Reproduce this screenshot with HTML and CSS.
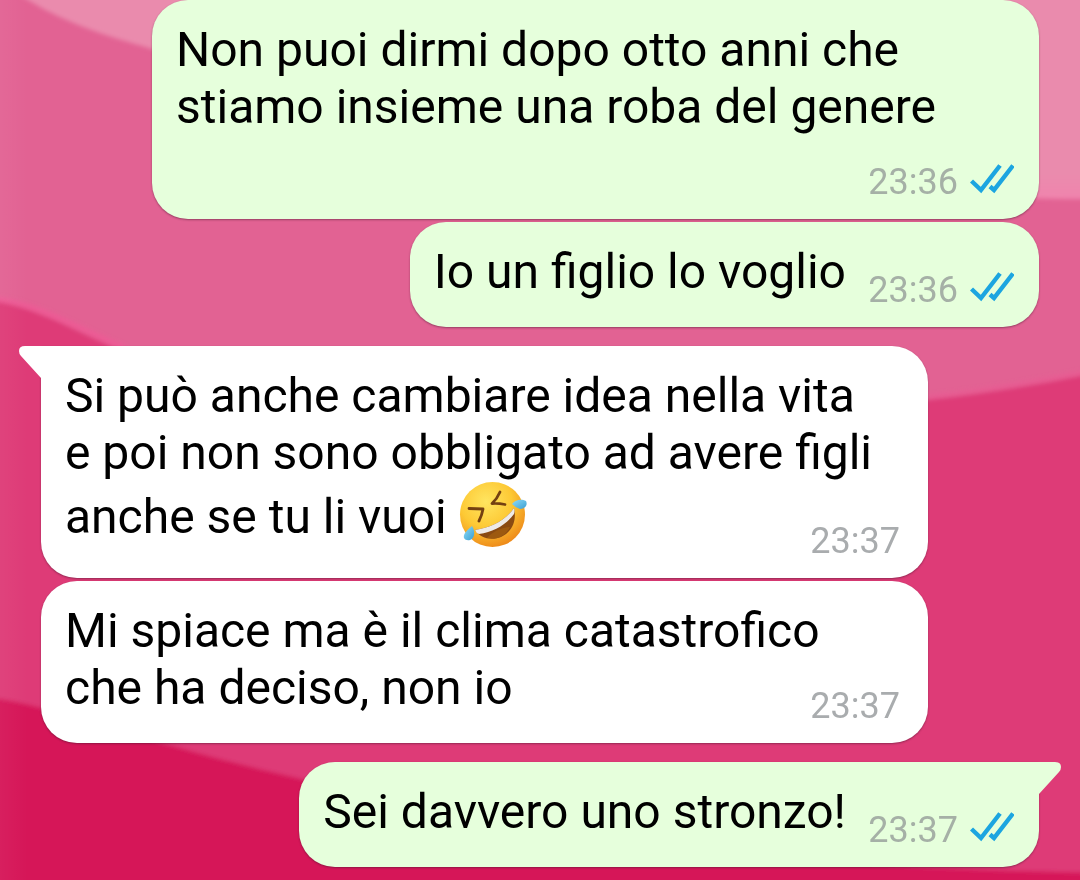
FILE: index.html
```html
<!DOCTYPE html>
<html lang="it">
<head>
    <meta charset="UTF-8">
    <meta name="viewport" content="width=device-width, initial-scale=1.0">
    <title>Chat</title>
    <link rel="stylesheet" href="styles.css">
</head>
<body>
    <svg class="wallpaper" viewBox="0 0 1080 880" preserveAspectRatio="none" aria-hidden="true">
        <defs>
            <linearGradient id="edge" x1="0" x2="1" y1="0" y2="0">
                <stop offset="0" stop-color="#fff" stop-opacity=".04"/>
                <stop offset="1" stop-color="#fff" stop-opacity="0"/>
            </linearGradient>
            <linearGradient id="light" x1="0" x2="0" y1="0" y2="1">
                <stop offset="0" stop-color="#ea8bad"/>
                <stop offset=".88" stop-color="#ea8bad"/>
                <stop offset="1" stop-color="#f084ad"/>
            </linearGradient>
            <filter id="soft"><feGaussianBlur stdDeviation="2"/></filter>
        </defs>
        <rect width="1080" height="880" fill="#e26293"/>
        <g filter="url(#soft)">
            <path d="M12 -10C60 22 100 34 152 49C400 120 700 199 1100 199V-10Z" fill="url(#light)"/>
            <path d="M-10 300C40 308 80 334 125 352C350 430 650 430 928 400Q1010 391 1100 372V900H-10Z" fill="#de3a77"/>
            <path d="M-10 298C40 304 80 330 125 348" fill="none" stroke="#ee5a95" stroke-width="5"/>
            <path d="M928 397Q1010 388 1100 369" fill="none" stroke="#e85c93" stroke-width="4"/>
            <path d="M-10 697C70 710 140 742 301 779C500 830 760 868 1100 873V900H-10Z" fill="#d61459"/>
        </g>
        <rect width="28" height="880" fill="url(#edge)"/>
    </svg>

    <svg class="symbols" aria-hidden="true">
        <symbol id="ticks" viewBox="0 0 44 30">
            <path d="M1.500 17L11 26L30 1.500M20 22.500L24 26L43 1.500" fill="none" stroke="#1ca5e0" stroke-width="4.400"/>
        </symbol>
        <symbol id="tail" viewBox="0 0 22 32">
            <path d="M0 0H16Q22 0 22 5Q22 8 20 10L0 32Z" fill="currentColor"/>
        </symbol>
    </svg>

    <main class="chat">
        <div class="message out">
            <p class="text">Non puoi dirmi dopo otto anni che stiamo insieme una roba del genere<span class="spacer"></span></p>
            <div class="meta"><time>23:36</time><svg class="ticks" role="img" aria-label="Letto"><use href="#ticks"/></svg></div>
        </div>
        <div class="message out">
            <p class="text">Io un figlio lo voglio<span class="spacer"></span></p>
            <div class="meta"><time>23:36</time><svg class="ticks" role="img" aria-label="Letto"><use href="#ticks"/></svg></div>
        </div>

        <div class="message in first">
            <svg class="tail" aria-hidden="true"><use href="#tail"/></svg>
            <p class="text">Si può anche cambiare idea nella vita<br>e poi non sono obbligato ad avere figli anche se tu li vuoi
                <svg class="emoji" viewBox="0 0 70 70" role="img" aria-label="Faccina che ride">
                    <defs>
                        <radialGradient id="face" cx=".4" cy=".3" r=".72">
                            <stop offset="0" stop-color="#ffe560"/>
                            <stop offset=".55" stop-color="#fdc935"/>
                            <stop offset="1" stop-color="#ee8a1a"/>
                        </radialGradient>
                        <linearGradient id="tear" x1="0" x2="1" y1="0" y2="1">
                            <stop offset="0" stop-color="#8fdcf8"/>
                            <stop offset="1" stop-color="#3a9fd2"/>
                        </linearGradient>
                    </defs>
                    <circle cx="33.500" cy="33.500" r="32.500" fill="url(#face)"/>
                    <path d="M16 49C32 47 47 39 55 27C58 40 53 51 42 56C32 60 21 57 16 49Z" fill="#8a4a12"/>
                    <path d="M16 49C32 47 47 39 55 27Q56 30 55 33C47 44 35 51 20 53Q17 52 16 49Z" fill="#eeeae8"/>
                    <path d="M28 57C33 51 43 46 51 46C48 52 43 56 37 57.500Q32 58 28 57Z" fill="#a5600f" opacity=".7"/>
                    <path d="M10 27.500L24 28Q23 34 20 40" fill="none" stroke="#744011" stroke-width="2.800" stroke-linecap="round" stroke-linejoin="round"/>
                    <path d="M41 11Q38 18 33 22.500Q39 22 46 23.500" fill="none" stroke="#744011" stroke-width="2.800" stroke-linecap="round" stroke-linejoin="round"/>
                    <path d="M53 23C57 18 63 18 67 20C69 24 66 28 61 28Q57 27 53 23Z" fill="url(#tear)"/>
                    <path d="M13 45C17 51 15 58 11 59C6 60 3 57 6 52Q9 48 13 45Z" fill="url(#tear)"/>
                </svg><span class="spacer"></span></p>
            <div class="meta"><time>23:37</time></div>
        </div>
        <div class="message in">
            <p class="text">Mi spiace ma è il clima catastrofico che ha deciso, non io<span class="spacer"></span></p>
            <div class="meta"><time>23:37</time></div>
        </div>

        <div class="message out first">
            <svg class="tail" aria-hidden="true"><use href="#tail"/></svg>
            <p class="text">Sei davvero uno stronzo!<span class="spacer"></span></p>
            <div class="meta"><time>23:37</time><svg class="ticks" role="img" aria-label="Letto"><use href="#ticks"/></svg></div>
        </div>
    </main>
</body>
</html>
```
FILE: styles.css
```css
* {
    box-sizing: border-box;
}
body {
    margin: 0;
    font-family: Roboto, "Liberation Sans", sans-serif;
    background-color: #e26293;
}
.wallpaper {
    position: fixed;
    top: 0;
    left: 0;
    width: 100%;
    height: 100%;
    z-index: -1;
}
.symbols {
    display: none;
}
.chat {
    display: flex;
    flex-direction: column;
    gap: 3px;
    padding: 0 41px 14px;
}
/* text and time share one cell, the spacer keeps them apart */
.message {
    display: grid;
    position: relative;
    max-width: 887px;
    padding: 21px 25px 16px 24px;
    border-radius: 36px;
    box-shadow: 0 1px 2px rgba(60, 20, 40, 0.45);
}
.out {
    align-self: flex-end;
    background-color: #e6ffdc;
    color: #e6ffdc;
}
.in {
    align-self: flex-start;
    background-color: #fff;
    color: #fff;
}
.first {
    margin-top: 16px;
}
.out.first {
    border-top-right-radius: 0;
}
.in.first {
    border-top-left-radius: 0;
}
.tail {
    position: absolute;
    top: 0;
    width: 22px;
    height: 32px;
}
.out .tail {
    left: 100%;
}
.in .tail {
    right: 100%;
    transform: scaleX(-1);
}
.text {
    grid-area: 1 / 1;
    margin: 0 0 11px;
    font-size: 48px;
    line-height: 57px;
    color: #000;
}
.spacer {
    display: inline-block;
    width: 168px;
}
.in .spacer {
    width: 112px;
}
.meta {
    grid-area: 1 / 1;
    place-self: end;
    display: flex;
    align-items: center;
    gap: 12px;
    font-size: 36px;
    line-height: 42px;
    color: #a5b0a6;
}
.in .meta {
    padding-right: 3px;
    color: #a9acae;
}
.ticks {
    width: 44px;
    height: 30px;
    margin-bottom: 6px;
}
.emoji {
    width: 70px;
    height: 70px;
    vertical-align: -18px;
}
```
